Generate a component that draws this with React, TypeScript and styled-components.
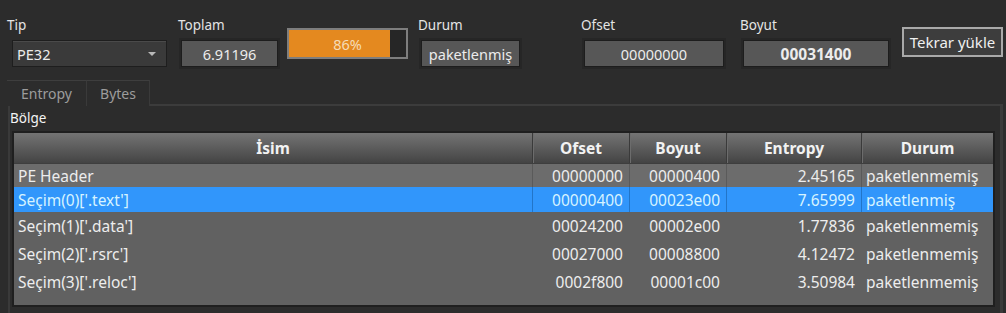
import React from 'react';
import styled, { createGlobalStyle } from 'styled-components';

const GlobalStyle = createGlobalStyle`
  html, body {
    margin: 0;
    padding: 0;
    background: #2c2c2c;
  }
  body {
    font-family: 'Noto Sans', 'Open Sans', Arial, sans-serif;
    color: #e6e6e6;
    overflow: hidden;
  }
`;

type Region = {
  name: string;
  offset: string;
  size: string;
  entropy: string;
  status: string;
  height: number;
};

const regions: Region[] = [
  { name: 'PE Header', offset: '00000000', size: '00000400', entropy: '2.45165', status: 'paketlenmemiş', height: 23 },
  { name: "Seçim(0)['.text']", offset: '00000400', size: '00023e00', entropy: '7.65999', status: 'paketlenmiş', height: 25 },
  { name: "Seçim(1)['.data']", offset: '00024200', size: '00002e00', entropy: '1.77836', status: 'paketlenmemiş', height: 28 },
  { name: "Seçim(2)['.rsrc']", offset: '00027000', size: '00008800', entropy: '4.12472', status: 'paketlenmemiş', height: 28 },
  { name: "Seçim(3)['.reloc']", offset: '0002f800', size: '00001c00', entropy: '3.50984', status: 'paketlenmemiş', height: 28 },
];

const percent = 86;

const Page = styled.div`
  width: 1006px;
  height: 313px;
  box-sizing: border-box;
  display: flex;
  flex-direction: column;
`;

const Toolbar = styled.div`
  display: flex;
  align-items: flex-start;
  height: 80px;
  padding: 17px 0 0 7px;
  box-sizing: border-box;
  & > * {
    flex-shrink: 0;
  }
`;

const Group = styled.div<{ $width: number; $gap?: number }>`
  display: flex;
  flex-direction: column;
  width: ${(p) => p.$width}px;
  margin-left: ${(p) => p.$gap ?? 0}px;
`;

const Label = styled.div`
  font-size: 13.5px;
  line-height: 16px;
  height: 20px;
  color: #e4e4e4;
`;

const ValueBox = styled.div<{ $bold?: boolean }>`
  margin: 3px 0 0 3px;
  height: 27px;
  box-sizing: border-box;
  background: #575757;
  border: 1px solid #1d1d1d;
  box-shadow: 0 0 0 2px #262626;
  display: flex;
  align-items: center;
  justify-content: center;
  font-size: ${(p) => (p.$bold ? 15.5 : 14.5)}px;
  font-weight: ${(p) => (p.$bold ? 700 : 400)};
  color: #ececec;
`;

const Combo = styled.div`
  margin: 3px 0 0 5px;
  height: 27px;
  box-sizing: border-box;
  background: #3a3a3a;
  border: 1px solid #1e1e1e;
  box-shadow: inset 0 1px 0 #4a4a4a;
  display: flex;
  align-items: center;
  justify-content: space-between;
  padding: 0 10px 0 4px;
  font-size: 14.5px;
  color: #ececec;
`;

const Arrow = styled.span`
  width: 0;
  height: 0;
  border-left: 4px solid transparent;
  border-right: 4px solid transparent;
  border-top: 4px solid #b8b8b8;
`;

const Progress = styled.div`
  margin: 11px 0 0 9px;
  width: 121px;
  height: 31px;
  box-sizing: border-box;
  border: 2px solid #7e7e7e;
  background: #262626;
  position: relative;
  display: flex;
`;

const ProgressFill = styled.div`
  background: #e4891f;
  height: 100%;
`;

const ProgressText = styled.span`
  position: absolute;
  inset: 0;
  display: flex;
  align-items: center;
  justify-content: center;
  font-size: 14.5px;
  color: #f6dcb6;
`;

const ReloadButton = styled.button`
  margin: 10px 0 0 13px;
  width: 101px;
  height: 30px;
  box-sizing: border-box;
  background: #3d3d3d;
  border: 2px solid #a9a9a9;
  color: #f0f0f0;
  font-family: inherit;
  font-size: 15px;
  padding: 0;
  white-space: nowrap;
`;

const TabBar = styled.div`
  display: flex;
  align-items: stretch;
  height: 26px;
  margin-left: 7px;
`;

const Tab = styled.div<{ $width: number }>`
  width: ${(p) => p.$width}px;
  box-sizing: border-box;
  border-top: 1px solid #3e3e3e;
  border-right: 1px solid #3a3a3a;
  display: flex;
  align-items: center;
  justify-content: center;
  font-size: 14px;
  color: #9c9c9c;
  &:last-of-type {
    border-right: none;
  }
`;

const TabFiller = styled.div`
  flex: 1;
  border-bottom: 2px solid #3c3c3c;
  margin-right: 3px;
`;

const Panel = styled.div`
  flex: 1;
  margin: 0 3px 0 8px;
  border-left: 2px solid #3a3a3a;
  border-right: 3px solid #3a3a3a;
  display: flex;
  flex-direction: column;
`;

const SectionTitle = styled.div`
  font-size: 13.5px;
  line-height: 16px;
  padding: 4px 0 0 0;
  height: 25px;
  box-sizing: border-box;
  color: #f4f4f4;
`;

const TableFrame = styled.div`
  margin: 0 5px 6px 2px;
  flex: 1;
  border: 2px solid #1f1f1f;
  background: #616161;
  display: flex;
  flex-direction: column;
`;

const columns = '518px 97px 97px 135px 1fr';

const HeaderRow = styled.div`
  display: grid;
  grid-template-columns: ${columns};
  height: 30px;
  background: linear-gradient(#747474 0%, #5e5e5e 45%, #4b4b4b 85%, #434343 100%);
  border-bottom: 1px solid #3e3e3e;
`;

const HeaderCell = styled.div`
  display: flex;
  align-items: center;
  justify-content: center;
  font-size: 15.5px;
  font-weight: 700;
  color: #f2f2f2;
  border-left: 1px solid #3a3a3a;
  box-shadow: inset 1px 0 0 #6c6c6c;
  &:first-child {
    border-left: none;
    box-shadow: none;
  }
`;

const Row = styled.div<{ $selected?: boolean; $hover?: boolean }>`
  display: grid;
  grid-template-columns: ${columns};
  background: ${(p) => (p.$selected ? '#3196fb' : p.$hover ? '#6c6c6c' : 'transparent')};
  color: ${(p) => (p.$selected ? '#d6f3ff' : '#ededed')};
  font-size: 15.5px;
`;

const Cell = styled.div<{ $align: 'left' | 'right'; $divider?: string }>`
  display: flex;
  align-items: center;
  justify-content: ${(p) => (p.$align === 'right' ? 'flex-end' : 'flex-start')};
  padding: ${(p) => (p.$align === 'right' ? '0 6px 0 0' : '0 0 0 4px')};
  border-left: 1px solid ${(p) => p.$divider ?? 'transparent'};
  white-space: nowrap;
  &:first-child {
    border-left: none;
  }
`;

const App: React.FC = () => {
  return (
    <>
      <GlobalStyle />
      <Page>
        <Toolbar>
          <Group $width={160}>
            <Label>Tip</Label>
            <Combo>
              <span>PE32</span>
              <Arrow />
            </Combo>
          </Group>
          <Group $width={100} $gap={11}>
            <Label>Toplam</Label>
            <ValueBox>6.91196</ValueBox>
          </Group>
          <Progress>
            <ProgressFill style={{ width: `${percent}%` }} />
            <ProgressText>{percent}%</ProgressText>
          </Progress>
          <Group $width={102} $gap={10}>
            <Label>Durum</Label>
            <ValueBox>paketlenmiş</ValueBox>
          </Group>
          <Group $width={143} $gap={61}>
            <Label>Ofset</Label>
            <ValueBox>00000000</ValueBox>
          </Group>
          <Group $width={149} $gap={16}>
            <Label>Boyut</Label>
            <ValueBox $bold>00031400</ValueBox>
          </Group>
          <ReloadButton>Tekrar yükle</ReloadButton>
        </Toolbar>

        <TabBar>
          <Tab $width={80}>Entropy</Tab>
          <Tab $width={63}>Bytes</Tab>
          <TabFiller />
        </TabBar>

        <Panel>
          <SectionTitle>Bölge</SectionTitle>
          <TableFrame>
            <HeaderRow>
              <HeaderCell>İsim</HeaderCell>
              <HeaderCell>Ofset</HeaderCell>
              <HeaderCell>Boyut</HeaderCell>
              <HeaderCell>Entropy</HeaderCell>
              <HeaderCell>Durum</HeaderCell>
            </HeaderRow>
            {regions.map((r, i) => {
              const selected = i === 1;
              const divider = selected ? '#2275c8' : i === 0 ? '#5a5a5a' : undefined;
              return (
                <Row key={r.name} $selected={selected} $hover={i === 0} style={{ height: r.height }}>
                  <Cell $align="left">{r.name}</Cell>
                  <Cell $align="right" $divider={divider}>{r.offset}</Cell>
                  <Cell $align="right" $divider={divider}>{r.size}</Cell>
                  <Cell $align="right" $divider={divider}>{r.entropy}</Cell>
                  <Cell $align="left" $divider={divider}>{r.status}</Cell>
                </Row>
              );
            })}
          </TableFrame>
        </Panel>
      </Page>
    </>
  );
};

export default App;
